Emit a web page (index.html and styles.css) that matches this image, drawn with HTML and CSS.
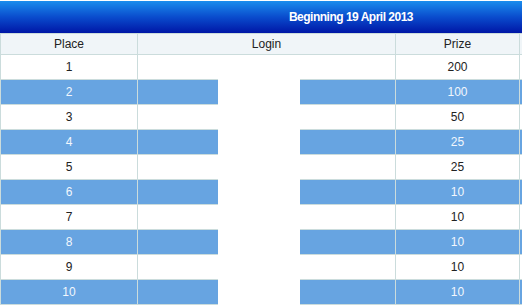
FILE: index.html
```html
<!DOCTYPE html>
<html>
<head>
<meta charset="utf-8">
<link rel="stylesheet" href="styles.css">
</head>
<body>
<div class="board">
  <div class="title">Beginning 19 April 2013</div>
  <div class="grid">
    <div class="row head"><div>Place</div><div>Login</div><div>Prize</div><div></div></div>
    <div class="row"><div>1</div><div></div><div>200</div><div></div></div>
    <div class="row alt"><div>2</div><div></div><div>100</div><div></div></div>
    <div class="row"><div>3</div><div></div><div>50</div><div></div></div>
    <div class="row alt"><div>4</div><div></div><div>25</div><div></div></div>
    <div class="row"><div>5</div><div></div><div>25</div><div></div></div>
    <div class="row alt"><div>6</div><div></div><div>10</div><div></div></div>
    <div class="row"><div>7</div><div></div><div>10</div><div></div></div>
    <div class="row alt"><div>8</div><div></div><div>10</div><div></div></div>
    <div class="row"><div>9</div><div></div><div>10</div><div></div></div>
    <div class="row alt"><div>10</div><div></div><div>10</div><div></div></div>
  </div>
  <div class="blank"></div>
</div>
</body>
</html>
```
FILE: styles.css
```css
html, body {
  margin: 0;
  padding: 0;
  background: #ffffff;
  overflow: hidden;
}
.board {
  position: relative;
  width: 522px;
  padding-top: 1px;
  font-family: "Liberation Sans", Arial, sans-serif;
  font-size: 12px;
  color: #222222;
}
.title {
  height: 32px;
  line-height: 32px;
  padding-left: 180px;
  background: linear-gradient(to bottom, #1b8ded 0%, #0a4ccd 50%, #0016a6 100%);
  color: #ffffff;
  font-weight: bold;
  letter-spacing: -0.5px;
  text-align: center;
}
.grid {
  display: grid;
  gap: 1px;
  padding: 1px 0 1px 1px;
  background: #cbdcdc;
}
.row {
  display: grid;
  grid-template-columns: 136px 257px 123px 1fr;
  gap: 1px;
}
.row > div {
  height: 24px;
  line-height: 24px;
  text-align: center;
  background: #ffffff;
}
.row.head > div {
  height: 20px;
  line-height: 20px;
  background: #f0f5f8;
}
.row.alt > div {
  background: #67a4e1;
  color: #f2f7fd;
}
.blank {
  position: absolute;
  left: 218px;
  top: 55px;
  width: 82px;
  height: 260px;
  background: #ffffff;
}
```
